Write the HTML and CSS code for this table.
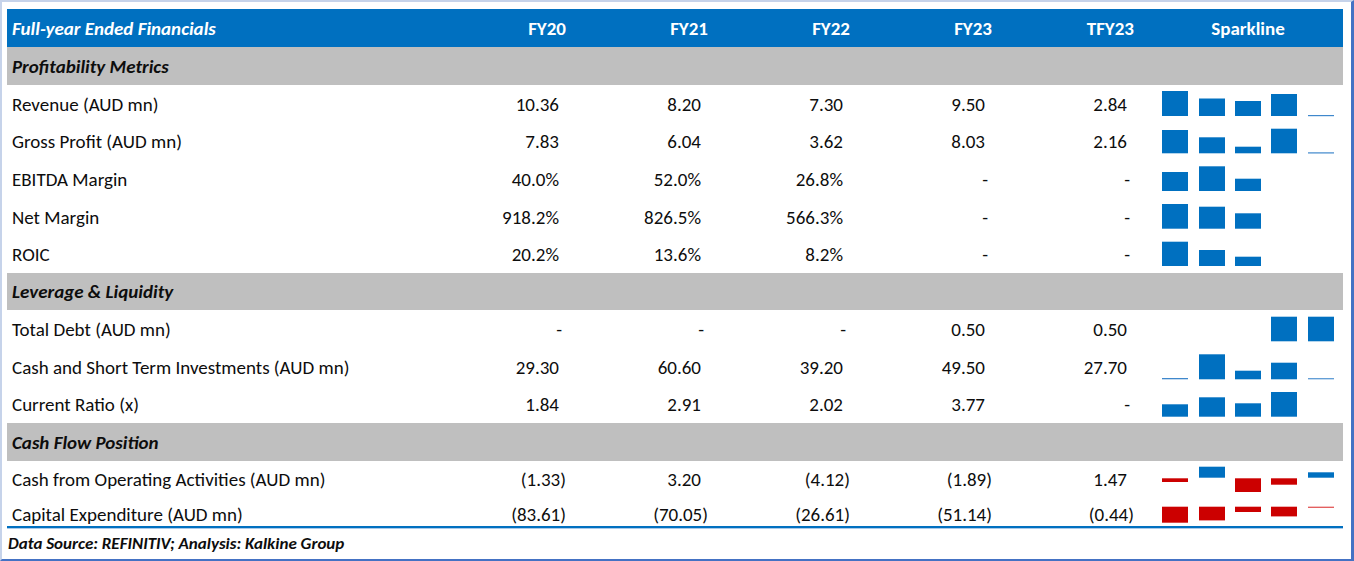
FILE: index.html
```html
<!DOCTYPE html>
<html>
<head>
<meta charset="utf-8">
<link rel="stylesheet" href="styles.css">
</head>
<body>
<div class="frame">
  <div class="table">
    <div class="row head h38">
      <div class="label title">Full-year Ended Financials</div>
      <div class="num hd">FY20</div>
      <div class="num hd">FY21</div>
      <div class="num hd">FY22</div>
      <div class="num hd">FY23</div>
      <div class="num hd">TFY23</div>
      <div class="spark-hd">Sparkline</div>
    </div>

    <div class="row section h38"><div class="label">Profitability Metrics</div></div>

    <div class="row h38">
      <div class="label">Revenue (AUD mn)</div>
      <div class="num pos">10.36</div><div class="num pos">8.20</div><div class="num pos">7.30</div><div class="num pos">9.50</div><div class="num pos">2.84</div>
      <div class="spark"><svg class="sv" width="182" height="38"><rect x="5" y="6" width="26" height="25"/><rect x="42" y="13.5" width="26" height="17.5"/><rect x="78" y="16" width="26" height="15"/><rect x="114" y="9" width="26" height="22"/><rect class="thin" x="151" y="30" width="26" height="1.2"/></svg></div>
    </div>
    <div class="row h37">
      <div class="label">Gross Profit (AUD mn)</div>
      <div class="num pos">7.83</div><div class="num pos">6.04</div><div class="num pos">3.62</div><div class="num pos">8.03</div><div class="num pos">2.16</div>
      <div class="spark"><svg class="sv" width="182" height="37"><rect x="5" y="7" width="26" height="23.3"/><rect x="42" y="14.3" width="26" height="16"/><rect x="78" y="23.7" width="26" height="6.6"/><rect x="114" y="5.7" width="26" height="24.6"/><rect class="thin" x="151" y="29.3" width="26" height="1.2"/></svg></div>
    </div>
    <div class="row h38">
      <div class="label">EBITDA Margin</div>
      <div class="num pos">40.0%</div><div class="num pos">52.0%</div><div class="num pos">26.8%</div><div class="num dash">-</div><div class="num dash">-</div>
      <div class="spark"><svg class="sv" width="182" height="38"><rect x="5" y="12" width="26" height="19"/><rect x="42" y="6.3" width="26" height="24.7"/><rect x="78" y="18.7" width="26" height="12.3"/></svg></div>
    </div>
    <div class="row h38">
      <div class="label">Net Margin</div>
      <div class="num pos">918.2%</div><div class="num pos">826.5%</div><div class="num pos">566.3%</div><div class="num dash">-</div><div class="num dash">-</div>
      <div class="spark"><svg class="sv" width="182" height="38"><rect x="5" y="6" width="26" height="24.7"/><rect x="42" y="8.7" width="26" height="22"/><rect x="78" y="15.3" width="26" height="15.4"/></svg></div>
    </div>
    <div class="row h37">
      <div class="label">ROIC</div>
      <div class="num pos">20.2%</div><div class="num pos">13.6%</div><div class="num pos">8.2%</div><div class="num dash">-</div><div class="num dash">-</div>
      <div class="spark"><svg class="sv" width="182" height="37"><rect x="5" y="5.7" width="26" height="24.3"/><rect x="42" y="14" width="26" height="16"/><rect x="78" y="20.7" width="26" height="9.3"/></svg></div>
    </div>

    <div class="row section h37"><div class="label">Leverage &amp; Liquidity</div></div>

    <div class="row h38">
      <div class="label">Total Debt (AUD mn)</div>
      <div class="num dash">-</div><div class="num dash">-</div><div class="num dash">-</div><div class="num pos">0.50</div><div class="num pos">0.50</div>
      <div class="spark"><svg class="sv" width="182" height="38"><rect x="114" y="6.7" width="26" height="24.6"/><rect x="151" y="6.7" width="26" height="24.6"/></svg></div>
    </div>
    <div class="row h38">
      <div class="label">Cash and Short Term Investments (AUD mn)</div>
      <div class="num pos">29.30</div><div class="num pos">60.60</div><div class="num pos">39.20</div><div class="num pos">49.50</div><div class="num pos">27.70</div>
      <div class="spark"><svg class="sv" width="182" height="38"><rect class="thin" x="5" y="30" width="26" height="1.3"/><rect x="42" y="6.3" width="26" height="25"/><rect x="78" y="22.7" width="26" height="8.6"/><rect x="114" y="14.7" width="26" height="16.6"/><rect class="thin" x="151" y="30.2" width="26" height="1.1"/></svg></div>
    </div>
    <div class="row h37">
      <div class="label">Current Ratio (x)</div>
      <div class="num pos">1.84</div><div class="num pos">2.91</div><div class="num pos">2.02</div><div class="num pos">3.77</div><div class="num dash">-</div>
      <div class="spark"><svg class="sv" width="182" height="37"><rect x="5" y="18.3" width="26" height="12.4"/><rect x="42" y="11.3" width="26" height="19.4"/><rect x="78" y="17.3" width="26" height="13.4"/><rect x="114" y="6" width="26" height="24.7"/></svg></div>
    </div>

    <div class="row section h38"><div class="label">Cash Flow Position</div></div>

    <div class="row h37">
      <div class="label">Cash from Operating Activities (AUD mn)</div>
      <div class="num">(1.33)</div><div class="num pos">3.20</div><div class="num">(4.12)</div><div class="num">(1.89)</div><div class="num pos">1.47</div>
      <div class="spark"><svg class="sv" width="182" height="37"><rect class="neg" x="5" y="17.3" width="26" height="3.7"/><rect x="42" y="5.7" width="26" height="11"/><rect class="neg" x="78" y="17.3" width="26" height="13.7"/><rect class="neg" x="114" y="17.3" width="26" height="6.4"/><rect x="151" y="11.3" width="26" height="5.4"/></svg></div>
    </div>
    <div class="row h28 last">
      <div class="label">Capital Expenditure (AUD mn)</div>
      <div class="num">(83.61)</div><div class="num">(70.05)</div><div class="num">(26.61)</div><div class="num">(51.14)</div><div class="num">(0.44)</div>
      <div class="spark"><svg class="sv" width="182" height="28"><rect class="neg" x="5" y="6.7" width="26" height="16"/><rect class="neg" x="42" y="6.7" width="26" height="13.7"/><rect class="neg" x="78" y="6.7" width="26" height="5.3"/><rect class="neg" x="114" y="6.7" width="26" height="9.7"/><rect class="neg thin" x="151" y="6.7" width="26" height="1.1"/></svg></div>
    </div>
  </div>
  <div class="footer">Data Source: REFINITIV; Analysis: Kalkine Group</div>
</div>
</body>
</html>
```

FILE: styles.css
```css
* { box-sizing: border-box; }
html, body { margin: 0; padding: 0; background: #fff; }
body { font-family: Carlito, Calibri, Lato, "Liberation Sans", sans-serif; color: #0d0d0d; }

.frame {
  width: 1354px;
  height: 561px;
  border-left: 2px solid #c6d3ea;
  border-top: 2px solid #c6d3ea;
  border-right: 3px solid #4472c4;
  border-bottom: 2px solid #4472c4;
  padding: 7px 8px 0 5px;
  display: flex;
  flex-direction: column;
}

.table {
  display: flex;
  flex-direction: column;
  border-bottom: 2px solid #0070c0;
  box-shadow: 0 1px 0 #a9c9ea;
}

.row {
  display: grid;
  grid-template-columns: 421px repeat(5, 142px) 205px;
  align-items: center;
  font-size: 19px;
  line-height: 1;
}
.h38 { height: 38px; }
.h37 { height: 37px; }
.h28 { height: 28px; }
.last { padding-top: 2px; }

.label { padding-left: 5px; white-space: nowrap; }
.num { text-align: right; padding-right: 4px; white-space: nowrap; }
.num.pos { padding-right: 11px; }
.num.dash { padding-right: 8px; }

.head { background: #0070c0; color: #fff; font-weight: 700; }
.head .title { font-style: italic; }
.spark-hd { text-align: center; padding-left: 15px; }

.section { background: #bfbfbf; font-weight: 700; font-style: italic; }
.section .label { grid-column: 1 / -1; }

.spark { padding-left: 19px; height: 100%; }
.sv { display: block; }
.sv rect { fill: #0070c0; }
.sv rect.neg { fill: #cc0000; }
.sv rect.thin { fill: #3f88cc; }
.sv rect.neg.thin { fill: #dd3a3a; }

.footer {
  height: 31px;
  display: flex;
  align-items: center;
  padding-left: 1px;
  font-size: 17px;
  font-weight: 700;
  font-style: italic;
}
```
